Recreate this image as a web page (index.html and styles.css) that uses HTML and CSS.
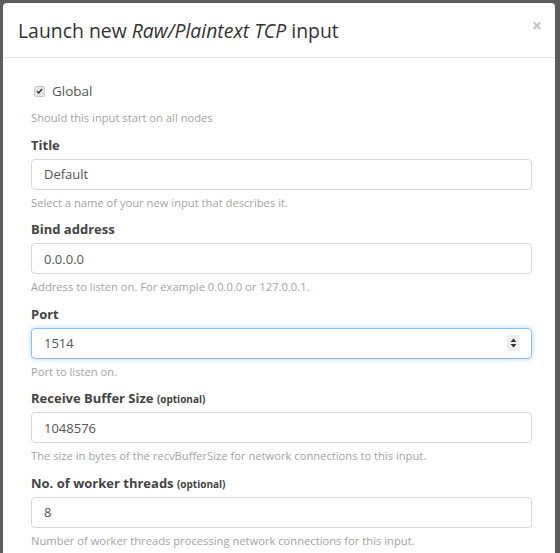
FILE: index.html
```html
<!DOCTYPE html>
<html>
<head>
<meta charset="utf-8">
<link rel="stylesheet" href="styles.css">
</head>
<body>
<div class="modal">
  <div class="modal-header">
    <h4 class="modal-title">Launch new <em>Raw/Plaintext TCP</em> input</h4>
    <span class="close">×</span>
  </div>
  <div class="modal-body">
    <div class="checkbox-row">
      <span class="checkbox">
        <svg width="10" height="10" viewBox="0 0 10 10"><path d="M2.2 5.2 L4.2 7.2 L7.8 2.8" fill="none" stroke="#333" stroke-width="1.6"/></svg>
      </span>
      <span class="check-label">Global</span>
    </div>
    <div class="help first-help">Should this input start on all nodes</div>

    <div class="group">
      <div class="label">Title</div>
      <div class="input">Default</div>
      <div class="help">Select a name of your new input that describes it.</div>
    </div>
    <div class="group">
      <div class="label">Bind address</div>
      <div class="input">0.0.0.0</div>
      <div class="help">Address to listen on. For example 0.0.0.0 or 127.0.0.1.</div>
    </div>
    <div class="group">
      <div class="label">Port</div>
      <div class="input focus"><span>1514</span>
        <span class="spin"><svg width="9" height="12" viewBox="0 0 9 12"><path d="M1.5 5 L4.5 1.5 L7.5 5 Z" fill="#333"/><path d="M1.5 7 L4.5 10.5 L7.5 7 Z" fill="#333"/></svg></span>
      </div>
      <div class="help">Port to listen on.</div>
    </div>
    <div class="group">
      <div class="label">Receive Buffer Size <small>(optional)</small></div>
      <div class="input">1048576</div>
      <div class="help">The size in bytes of the recvBufferSize for network connections to this input.</div>
    </div>
    <div class="group">
      <div class="label">No. of worker threads <small>(optional)</small></div>
      <div class="input">8</div>
      <div class="help">Number of worker threads processing network connections for this input.</div>
    </div>
  </div>
</div>
</body>
</html>
```
FILE: styles.css
```css
html, body {
  margin: 0;
  padding: 0;
  height: 100%;
  overflow: hidden;
}
body {
  background: #5c5c5c;
  font-family: "Open Sans", "Noto Sans", sans-serif;
  color: #333;
}
.modal {
  margin: 3px 5px 0 3px;
  background: #fff;
  border-radius: 4px 4px 0 0;
  height: 600px;
}
.modal-header {
  height: 55px;
  box-sizing: border-box;
  border-bottom: 1px solid #e5e5e5;
  display: flex;
  align-items: center;
  justify-content: space-between;
  padding: 0 13px 0 15px;
}
.modal-title {
  margin: 0;
  font-size: 19.4px;
  font-weight: 400;
  color: #333;
}
.modal-title em {
  font-style: italic;
}
.close {
  font-size: 18px;
  font-weight: 700;
  color: #c4c4c4;
  line-height: 1;
  margin-top: -10px;
}
.modal-body {
  padding: 24px 23px 0 28px;
}
.checkbox-row {
  display: flex;
  align-items: center;
  height: 18px;
  padding-left: 3px;
}
.checkbox {
  width: 11px;
  height: 11px;
  box-sizing: border-box;
  border: 1px solid #c8c8c8;
  background: #e6e6e6;
  border-radius: 2px;
  display: flex;
  align-items: center;
  justify-content: center;
  margin-right: 7px;
}
.checkbox svg {
  display: block;
}
.check-label {
  font-size: 13.5px;
  color: #555;
}
.help {
  font-size: 11.2px;
  line-height: 16px;
  height: 16px;
  color: #a3a3a3;
  margin-top: 5px;
  white-space: nowrap;
}
.first-help {
  margin-top: 10px;
}
.group {
  margin-top: 9.5px;
}
.label {
  font-size: 13px;
  font-weight: 700;
  line-height: 18px;
  height: 18px;
  color: #444;
  margin-bottom: 5px;
}
.label small {
  font-size: 10px;
  font-weight: 700;
  line-height: 1;
}
.input {
  height: 31px;
  box-sizing: border-box;
  border: 1px solid #d6d6d6;
  border-radius: 4px;
  padding: 0 12px;
  display: flex;
  align-items: center;
  justify-content: space-between;
  font-size: 13px;
  color: #555;
}
.input.focus {
  border-color: #8fbde6;
  box-shadow: 0 0 5px rgba(102, 175, 233, 0.5);
  padding-right: 11px;
}
.spin {
  width: 13px;
  height: 16px;
  background: #eee;
  display: flex;
  align-items: center;
  justify-content: center;
}
```
